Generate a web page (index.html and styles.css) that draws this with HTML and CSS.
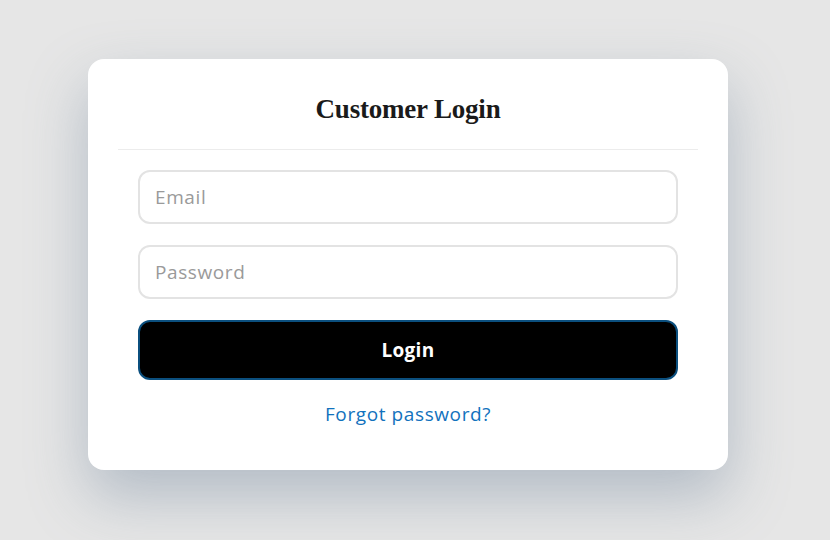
FILE: index.html
```html
<!DOCTYPE html>
<html lang="en">
<head>
<meta charset="utf-8">
<title>Customer Login</title>
<link rel="stylesheet" href="styles.css">
</head>
<body>
<div class="card">
  <div class="card-header">
    <h1 class="title">Customer Login</h1>
  </div>
  <div class="divider"></div>
  <form class="form">
    <input class="field" type="email" placeholder="Email">
    <input class="field" type="password" placeholder="Password">
    <button class="btn" type="button">Login</button>
    <a class="forgot" href="#">Forgot password?</a>
  </form>
</div>
</body>
</html>
```
FILE: styles.css
```css
* { box-sizing: border-box; }
html, body { margin: 0; height: 100%; }
body {
  background: #e6e6e6;
  padding: 59px 0 0 88px;
  font-family: "Open Sans", "Noto Sans", sans-serif;
}
.card {
  width: 640px;
  height: 411px;
  background: #fff;
  border-radius: 16px;
  box-shadow: 0 26px 60px rgba(115, 135, 158, 0.45);
}
.card-header {
  height: 90px;
  display: flex;
  align-items: center;
  justify-content: center;
  padding-top: 10px;
}
.title {
  margin: 0;
  font-family: "Liberation Serif", "DejaVu Serif", serif;
  font-weight: 700;
  font-size: 27px;
  color: #1a1a1a;
  letter-spacing: -0.2px;
}
.divider {
  height: 1px;
  background: #ececec;
  margin: 0 30px;
}
.form {
  display: flex;
  flex-direction: column;
  align-items: center;
  padding: 20px 50px 0;
}
.field {
  width: 540px;
  height: 54px;
  border: 2px solid #e3e3e3;
  border-radius: 12px;
  padding: 0 15px;
  font-family: inherit;
  font-size: 19px;
  letter-spacing: 0.6px;
  color: #333;
  margin-bottom: 21px;
  outline: none;
}
.field::placeholder { color: #9a9a9a; }
.btn {
  width: 540px;
  height: 60px;
  background: #000;
  color: #fff;
  border: 2px solid #0b4f7e;
  border-radius: 12px;
  font-family: inherit;
  font-weight: 700;
  font-size: 19px;
  letter-spacing: 0.3px;
  cursor: pointer;
}
.forgot {
  margin-top: 22px;
  font-size: 19px;
  line-height: 24px;
  letter-spacing: 0.6px;
  color: #1272bd;
  text-decoration: none;
}
```
